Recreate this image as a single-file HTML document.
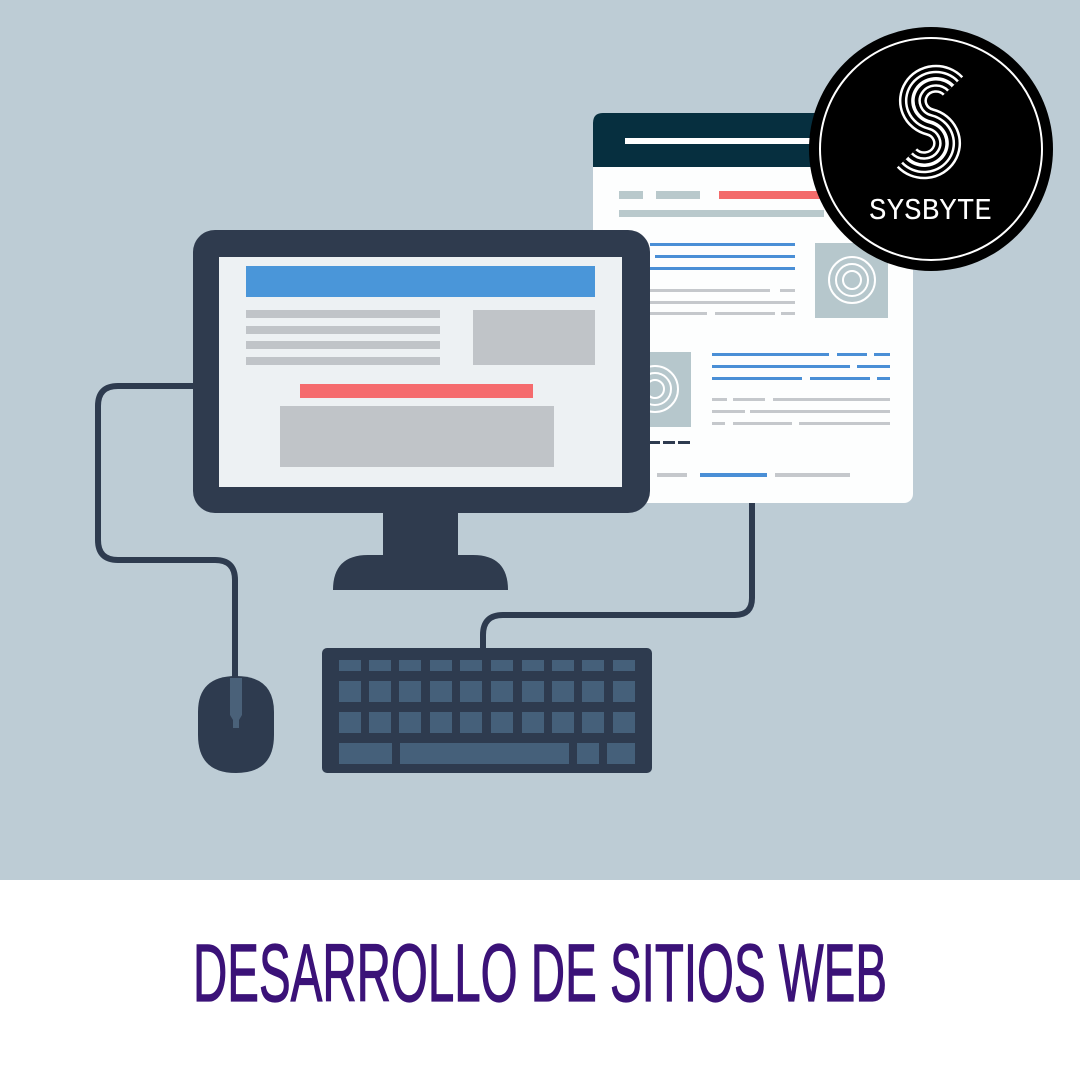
<!DOCTYPE html>
<html><head><meta charset="utf-8"><style>
html,body{margin:0;padding:0;width:1080px;height:1080px;overflow:hidden;background:#fff}
svg{display:block}
.mono{font-family:"Liberation Mono","DejaVu Sans Mono",monospace}
.sans{font-family:"Liberation Sans",sans-serif}
</style></head><body>
<svg width="1080" height="1080" viewBox="0 0 1080 1080" xmlns="http://www.w3.org/2000/svg">
<rect x="0" y="0" width="1080" height="880" fill="#bdccd5"/>
<rect x="0" y="880" width="1080" height="200" fill="#fff"/>

<g fill="none" stroke="#2e3b4f" stroke-width="6">
<path d="M200 386 H118 Q98 386 98 406 V540 Q98 560 118 560 H215 Q235 560 235 580 V680"/>
<path d="M483 650 V635 Q483 615 503 615 H735 Q752 615 752 598 V500"/>
</g>

<rect x="593" y="113" width="320" height="390" rx="9" fill="#fdfefe"/>
<path d="M593 167 V123 Q593 113 603 113 H903 Q913 113 913 123 V167 Z" fill="#062f3f"/>
<rect x="625" y="138" width="190" height="6" fill="#fff"/>
<rect x="619" y="191" width="24" height="8" fill="#b9c9cc"/>
<rect x="656" y="191" width="44" height="8" fill="#b9c9cc"/>
<rect x="719" y="191" width="101" height="8" fill="#f36b6b"/>
<rect x="619" y="210" width="205" height="7" fill="#b9c9cc"/>
<g fill="#4a8fd6">
<rect x="650" y="243" width="30" height="3"/><rect x="679" y="243" width="116" height="3"/>
<rect x="655" y="255" width="140" height="3"/>
<rect x="650" y="267" width="55" height="3"/><rect x="703" y="267" width="92" height="3"/>
<rect x="712" y="353" width="117" height="3"/><rect x="837" y="353" width="30" height="3"/><rect x="874" y="353" width="16" height="3"/>
<rect x="712" y="365" width="138" height="3"/><rect x="857" y="365" width="33" height="3"/>
<rect x="712" y="377" width="90" height="3"/><rect x="810" y="377" width="60" height="3"/><rect x="877" y="377" width="13" height="3"/>
<rect x="700" y="473" width="67" height="4"/>
</g>
<g fill="#c5c8cc">
<rect x="650" y="289" width="93" height="3"/><rect x="742" y="289" width="28" height="3"/><rect x="780" y="289" width="15" height="3"/>
<rect x="650" y="301" width="116" height="3"/><rect x="763" y="301" width="32" height="3"/>
<rect x="650" y="312" width="57" height="3"/><rect x="715" y="312" width="60" height="3"/><rect x="781" y="312" width="14" height="3"/>
<rect x="712" y="398" width="15" height="3"/><rect x="733" y="398" width="32" height="3"/><rect x="773" y="398" width="117" height="3"/>
<rect x="712" y="410" width="33" height="3"/><rect x="750" y="410" width="140" height="3"/>
<rect x="712" y="422" width="13" height="3"/><rect x="733" y="422" width="59" height="3"/><rect x="799" y="422" width="91" height="3"/>
<rect x="657" y="473" width="30" height="4"/><rect x="775" y="473" width="75" height="4"/>
</g>
<rect x="815" y="243" width="73" height="75" fill="#b6c7cc"/>
<g fill="none" stroke="#fff" stroke-width="2"><circle cx="852" cy="280" r="23"/><circle cx="852" cy="280" r="16"/><circle cx="852" cy="280" r="9"/></g>
<rect x="640" y="352" width="51" height="75" fill="#b6c7cc"/>
<g fill="none" stroke="#fff" stroke-width="2"><circle cx="655" cy="389" r="23"/><circle cx="655" cy="389" r="16"/><circle cx="655" cy="389" r="9"/></g>
<g fill="#2e3b4f"><rect x="650" y="441" width="10" height="3"/><rect x="663" y="441" width="12" height="3"/><rect x="678" y="441" width="12" height="3"/></g>

<rect x="193" y="230" width="457" height="283" rx="22" fill="#2f3b4e"/>
<rect x="219" y="257" width="403" height="230" fill="#edf1f3"/>
<rect x="246" y="266" width="349" height="31" fill="#4a96d9"/>
<g fill="#c0c4c8">
<rect x="246" y="310" width="194" height="8"/><rect x="246" y="326" width="194" height="8"/>
<rect x="246" y="341" width="194" height="8"/><rect x="246" y="357" width="194" height="8"/>
<rect x="473" y="310" width="122" height="55"/><rect x="280" y="406" width="274" height="61"/>
</g>
<rect x="300" y="384" width="233" height="14" fill="#f56b6d"/>
<rect x="383" y="512" width="75" height="45" fill="#2f3b4e"/>
<path d="M333 590 Q333 555 368 555 H473 Q508 555 508 590 Z" fill="#2f3b4e"/>

<path d="M198 712 Q198 676 236 676 Q274 676 274 712 V735 Q274 773 236 773 Q198 773 198 735 Z" fill="#2e3b4f"/>
<path d="M230 678 H242 V715 L239 720 V728 H233 V720 L230 715 Z" fill="#4a6179"/>

<rect x="322" y="648" width="330" height="125" rx="5" fill="#2e3b4f"/>
<g fill="#45607a">
<rect x="339" y="660" width="22" height="11"/><rect x="369" y="660" width="22" height="11"/><rect x="399" y="660" width="22" height="11"/><rect x="430" y="660" width="22" height="11"/><rect x="460" y="660" width="22" height="11"/><rect x="491" y="660" width="22" height="11"/><rect x="522" y="660" width="22" height="11"/><rect x="552" y="660" width="22" height="11"/><rect x="582" y="660" width="22" height="11"/><rect x="613" y="660" width="22" height="11"/>
<rect x="339" y="681" width="22" height="21"/><rect x="369" y="681" width="22" height="21"/><rect x="399" y="681" width="22" height="21"/><rect x="430" y="681" width="22" height="21"/><rect x="460" y="681" width="22" height="21"/><rect x="491" y="681" width="22" height="21"/><rect x="522" y="681" width="22" height="21"/><rect x="552" y="681" width="22" height="21"/><rect x="582" y="681" width="22" height="21"/><rect x="613" y="681" width="22" height="21"/>
<rect x="339" y="712" width="22" height="21"/><rect x="369" y="712" width="22" height="21"/><rect x="399" y="712" width="22" height="21"/><rect x="430" y="712" width="22" height="21"/><rect x="460" y="712" width="22" height="21"/><rect x="491" y="712" width="22" height="21"/><rect x="522" y="712" width="22" height="21"/><rect x="552" y="712" width="22" height="21"/><rect x="582" y="712" width="22" height="21"/><rect x="613" y="712" width="22" height="21"/>
<rect x="339" y="743" width="53" height="21"/><rect x="400" y="743" width="169" height="21"/><rect x="577" y="743" width="22" height="21"/><rect x="607" y="743" width="28" height="21"/>
</g>

<circle cx="931" cy="149" r="122" fill="#000"/>
<circle cx="931" cy="149" r="111" fill="none" stroke="#fff" stroke-width="2"/>
<g fill="none" stroke-linecap="butt">
<path d="M953 86 A23 22 0 1 0 930 122 A23 22 0 1 1 907 158" stroke="#fff" stroke-width="28"/>
<path d="M953 86 A23 22 0 1 0 930 122 A23 22 0 1 1 907 158" stroke="#000" stroke-width="23"/>
<path d="M953 86 A23 22 0 1 0 930 122 A23 22 0 1 1 907 158" stroke="#fff" stroke-width="16"/>
<path d="M953 86 A23 22 0 1 0 930 122 A23 22 0 1 1 907 158" stroke="#000" stroke-width="11"/>
<path d="M953 86 A23 22 0 1 0 930 122 A23 22 0 1 1 907 158" stroke="#fff" stroke-width="3.5"/>
</g>
<text class="mono" x="869" y="219" font-size="31" fill="#fff" textLength="123" lengthAdjust="spacingAndGlyphs">SYSBYTE</text>

<text class="sans" x="193" y="1001" font-size="82" stroke="#3b1278" stroke-width="1.2" fill="#3b1278" textLength="694" lengthAdjust="spacingAndGlyphs">DESARROLLO DE SITIOS WEB</text>
</svg>
</body></html>
